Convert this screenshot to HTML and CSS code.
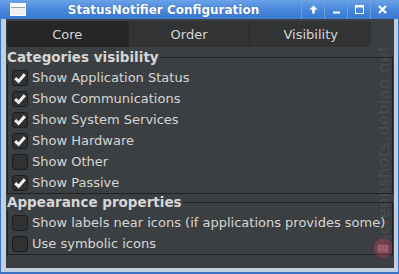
FILE: index.html
```html
<!DOCTYPE html>
<html lang="en">
<head>
    <meta charset="UTF-8">
    <title>StatusNotifier Configuration</title>
    <link rel="stylesheet" href="styles.css">
</head>
<body>
    <div class="window">
        <div class="titlebar">
            <span class="win-icon">
                <svg width="16" height="13" viewBox="0 0 16 13">
                    <rect x="0.5" y="0.5" width="15" height="12" fill="#eef0f3" stroke="#ffffff"/>
                    <rect x="1" y="1" width="14" height="3" fill="#fafafa"/>
                    <line x1="1" y1="4.5" x2="15" y2="4.5" stroke="#9aa3ad"/>
                </svg>
            </span>
            <span class="title">StatusNotifier Configuration</span>
            <div class="controls">
                <span class="ctl">
                    <svg width="9" height="9" viewBox="0 0 9 9"><path d="M4.5 0.5 L8.5 4.5 L5.8 4.5 L5.8 8.5 L3.2 8.5 L3.2 4.5 L0.5 4.5 Z" fill="#fff"/></svg>
                </span>
                <span class="ctl">
                    <svg width="9" height="9" viewBox="0 0 9 9"><rect x="1" y="6.5" width="7" height="2" fill="#fff"/></svg>
                </span>
                <span class="ctl">
                    <svg width="9" height="9" viewBox="0 0 9 9"><rect x="0.5" y="0.5" width="8" height="8" fill="none" stroke="#fff"/><rect x="0" y="0" width="9" height="2.5" fill="#fff"/></svg>
                </span>
                <span class="ctl">
                    <svg width="9" height="9" viewBox="0 0 9 9"><path d="M1 1 L8 8 M8 1 L1 8" stroke="#fff" stroke-width="2.2"/></svg>
                </span>
            </div>
        </div>

        <div class="client">
            <div class="tabs">
                <div class="tab active">Core</div>
                <div class="tab">Order</div>
                <div class="tab">Visibility</div>
            </div>

            <div class="group">
                <div class="group-title"><span>Categories visibility</span></div>
                <div class="group-body">
                    <div class="row"><span class="check on"></span>Show Application Status</div>
                    <div class="row"><span class="check on"></span>Show Communications</div>
                    <div class="row"><span class="check on"></span>Show System Services</div>
                    <div class="row"><span class="check on"></span>Show Hardware</div>
                    <div class="row"><span class="check"></span>Show Other</div>
                    <div class="row"><span class="check on"></span>Show Passive</div>
                </div>
            </div>

            <div class="group">
                <div class="group-title"><span>Appearance properties</span></div>
                <div class="group-body">
                    <div class="row"><span class="check"></span>Show labels near icons (if applications provides some)</div>
                    <div class="row"><span class="check"></span>Use symbolic icons</div>
                </div>
            </div>

            <!-- watermark -->
            <div class="watermark">screenshots.debian.net</div>
            <div class="stamp">
                <svg width="20" height="20" viewBox="0 0 20 20">
                    <circle cx="10" cy="10" r="9.5" fill="rgba(190,60,90,0.4)"/>
                    <rect x="4.5" y="6.5" width="11" height="8" rx="2" fill="rgba(200,200,200,0.3)"/>
                    <circle cx="10" cy="10.5" r="2.6" fill="none" stroke="rgba(190,60,90,0.7)" stroke-width="1.4"/>
                </svg>
            </div>
        </div>
    </div>
</body>
</html>
```

FILE: styles.css
```css
body {
    margin: 0;
    font-family: "DejaVu Sans", sans-serif;
    background-color: #ffffff;
}

.window {
    width: 399px;
    height: 274px;
    box-sizing: border-box;
    background-color: #c3cfdc;
    border-style: solid;
    border-color: #3a72c4;
    border-width: 0 1px 2px 1px;
    display: flex;
    flex-direction: column;
}

/* title bar */
.titlebar {
    height: 19px;
    flex: none;
    display: flex;
    align-items: center;
    background: linear-gradient(#6aa2e8, #4383d8 60%, #3d7ad0);
    margin: 0 -1px;
}

.win-icon {
    width: 16px;
    height: 13px;
    margin-left: 10px;
    display: flex;
}

.title {
    flex: 1;
    text-align: center;
    color: #ffffff;
    font-weight: bold;
    font-size: 12px;
    text-shadow: 0 0 1px rgba(20, 50, 100, 0.6);
}

.controls {
    display: flex;
    height: 19px;
    margin-right: 6px;
}

.ctl {
    width: 23px;
    display: flex;
    align-items: center;
    justify-content: center;
    border-left: 1px solid #6b9fe0;
    box-sizing: border-box;
}

/* client area */
.client {
    flex: 1;
    margin: 0 4px 4px 5px;
    background-color: #3c3f41;
    color: #d6d6d6;
    font-size: 13px;
    position: relative;
    overflow: hidden;
}

.tabs {
    display: flex;
    width: 364px;
    height: 26px;
    margin: 2px 0 3px 1px;
    background-color: #313335;
    border-radius: 4px;
    overflow: hidden;
}

.tab {
    flex: 1;
    display: flex;
    align-items: center;
    justify-content: center;
    border-left: 1px solid #26282a;
}

.tab:first-child {
    border-left: none;
}

.tab.active {
    background-color: #242628;
}

/* group frames */
.group {
    margin: 0 1px 1px 1px;
}

.group-title {
    display: flex;
    height: 15px;
    line-height: 15px;
    font-weight: bold;
    font-size: 13.5px;
}

.group-title span {
    padding-right: 1px;
}

.group-title::after {
    content: "";
    flex: 1;
    align-self: flex-end;
    height: 7px;
    border-top: 1px solid #1f2021;
    border-right: 1px solid #1f2021;
}

.group-body {
    border: 1px solid #1f2021;
    border-top: none;
    padding-top: 2px;
}

.row {
    height: 21px;
    display: flex;
    align-items: center;
    white-space: nowrap;
}

.check {
    width: 16px;
    height: 16px;
    box-sizing: border-box;
    margin: 0 4px 0 4px;
    border: 1px solid #1b1c1d;
    border-radius: 3px;
    background-color: #2f3133;
    flex: none;
}

.check.on {
    background-image: url("data:image/svg+xml;utf8,<svg xmlns='http://www.w3.org/2000/svg' width='14' height='14' viewBox='0 0 14 14'><path d='M2.2 7.2 L5.6 10.4 L11.8 3.2' fill='none' stroke='%23f4f4f4' stroke-width='3'/></svg>");
    background-repeat: no-repeat;
    background-position: center;
}

/* watermark overlay */
.watermark {
    position: absolute;
    right: 1px;
    top: 2px;
    writing-mode: vertical-rl;
    transform: rotate(180deg);
    font-size: 16px;
    letter-spacing: 0.5px;
    color: rgba(150, 155, 160, 0.17);
    height: 222px;
    text-align: left;
}

.stamp {
    position: absolute;
    right: 1px;
    top: 219px;
    width: 20px;
    height: 20px;
}
```
